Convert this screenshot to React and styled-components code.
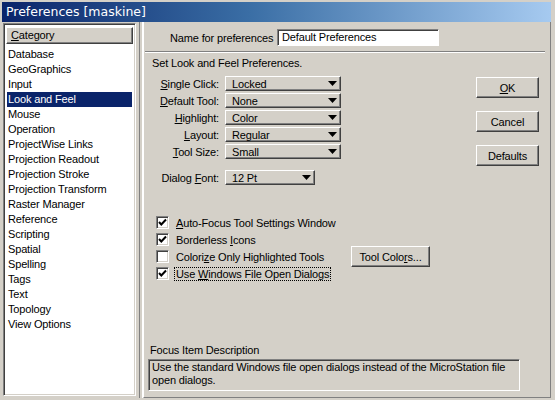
import { Fragment } from "react";
import styled, { createGlobalStyle } from "styled-components";

const GlobalStyle = createGlobalStyle`
  html, body { margin: 0; padding: 0; background: #d4d0c8; }
  * { box-sizing: border-box; }
  body {
    font-family: "Liberation Sans", Arial, sans-serif;
    font-size: 11px;
    letter-spacing: -0.15px;
    color: #000;
  }
`;

const Window = styled.div`
  width: 555px;
  height: 400px;
  background: #d4d0c8;
  padding: 2px 4px 2px 2px;
  display: flex;
  flex-direction: column;
  overflow: hidden;
`;

const TitleBar = styled.div`
  height: 20px;
  line-height: 20px;
  padding-left: 4px;
  background: linear-gradient(to right, #0a246a 0%, #3a6ea5 45%, #a6caf0 100%);
  color: #fff;
  font-family: "DejaVu Sans", Verdana, sans-serif;
  font-size: 12.5px;
  letter-spacing: 0;
  white-space: nowrap;
`;

const Body = styled.div`
  flex: 1;
  display: flex;
  min-height: 0;
`;

const ListPane = styled.div`
  width: 133px;
  margin: 1px 0 2px 1px;
  background: #fff;
  border: 1px solid;
  border-color: #808080 #fff #fff #808080;
  box-shadow: inset 1px 1px #404040, inset -1px -1px #d4d0c8;
  padding: 3px 2px 2px 2px;
  display: flex;
  flex-direction: column;
`;

const ListHeader = styled.div`
  height: 17px;
  line-height: 15px;
  padding-left: 4px;
  background: #d4d0c8;
  border: 1px solid;
  border-color: #fff #404040 #404040 #fff;
  box-shadow: inset -1px -1px #808080;
`;

const Items = styled.div`
  margin-top: 3px;
  padding: 0 1px 0 0;
  display: flex;
  flex-direction: column;
`;

const Item = styled.div`
  height: 15px;
  line-height: 15px;
  padding-left: 1px;
  margin-left: 1px;
  white-space: nowrap;
  background: ${(p) => (p.$selected ? "#0a246a" : "transparent")};
  color: ${(p) => (p.$selected ? "#fff" : "#000")};
`;

const Splitter = styled.div`
  width: 7px;
  display: flex;
  justify-content: center;
  &::before {
    content: "";
    width: 2px;
    margin-left: 2px;
    border-left: 1px solid #808080;
    border-right: 1px solid #fff;
  }
`;

const RightPane = styled.div`
  flex: 1;
  display: flex;
  flex-direction: column;
  border-left: 1px solid #fff;
  border-right: 1px solid #808080;
  border-bottom: 1px solid #808080;
`;

const NameRow = styled.div`
  display: flex;
  align-items: center;
  margin-top: 7px;
  padding-left: 26px;
  gap: 6px;
`;

const NameLabel = styled.span`
  width: 101px;
  text-align: right;
  white-space: nowrap;
`;

const TextInput = styled.div`
  width: 162px;
  height: 17px;
  line-height: 15px;
  padding-left: 4px;
  background: #fff;
  border: 1px solid;
  border-color: #808080 #fff #fff #808080;
  box-shadow: inset 1px 1px #404040;
`;

const Separator = styled.div`
  margin: 5px 0 0 1px;
  width: 400px;
  border-top: 1px solid #808080;
  border-bottom: 1px solid #fff;
`;

const Main = styled.div`
  display: flex;
`;

const Settings = styled.div`
  padding-left: 8px;
  display: flex;
  flex-direction: column;
`;

const Heading = styled.div`
  margin-top: 3px;
  line-height: 14px;
  white-space: nowrap;
`;

const FormGrid = styled.div`
  display: grid;
  grid-template-columns: 67px auto;
  grid-auto-rows: 15px;
  column-gap: 6px;
  row-gap: 2px;
  margin-top: ${(p) => p.$top}px;
  align-items: center;
`;

const FieldLabel = styled.span`
  text-align: right;
  white-space: nowrap;
`;

const Dropdown = styled.div`
  width: ${(p) => p.$width}px;
  height: 15px;
  display: flex;
  align-items: center;
  justify-content: space-between;
  padding: 0 3px 0 6px;
  background: #d4d0c8;
  border: 1px solid;
  border-color: #fff #404040 #404040 #fff;
  box-shadow: inset -1px -1px #808080;
`;

const Arrow = () => (
  <svg width="9" height="5" viewBox="0 0 9 5">
    <polygon points="0,0 9,0 4.5,5" fill="#000" />
  </svg>
);

const CheckList = styled.div`
  display: grid;
  grid-template-columns: 195px auto;
  grid-auto-rows: 17px;
  margin: 29px 0 0 4px;
  align-items: center;
`;

const CheckRow = styled.div`
  grid-column: 1;
  display: flex;
  align-items: center;
  gap: 5px;
  white-space: nowrap;
`;

const Box = styled.div`
  width: 13px;
  height: 13px;
  flex: none;
  background: #fff;
  border: 1px solid;
  border-color: #808080 #fff #fff #808080;
  box-shadow: inset 1px 1px #404040, inset -1px -1px #d4d0c8;
  display: flex;
  align-items: center;
  justify-content: center;
`;

const CheckLabel = styled.span`
  padding: 0 1px;
  border: 1px dotted ${(p) => (p.$focused ? "#000" : "transparent")};
  line-height: 12px;
`;

const Button = styled.div`
  width: ${(p) => p.$width}px;
  height: 21px;
  display: flex;
  align-items: center;
  justify-content: center;
  background: #d4d0c8;
  border: 1px solid;
  border-color: #fff #404040 #404040 #fff;
  box-shadow: inset -1px -1px #808080;
  white-space: nowrap;
`;

const ToolColors = styled(Button)`
  grid-column: 2;
  grid-row: 3;
  justify-self: start;
  align-self: center;
`;

const Buttons = styled.div`
  margin-left: auto;
  margin-right: 11px;
  padding-top: 24px;
  display: flex;
  flex-direction: column;
  gap: 13px;
`;

const Focus = styled.div`
  margin-top: auto;
  margin-bottom: 6px;
  padding-left: 4px;
`;

const FocusLabel = styled.div`
  padding-left: 2px;
  line-height: 14px;
  margin-bottom: 2px;
`;

const FocusBox = styled.div`
  width: 372px;
  height: 32px;
  padding: 1px 3px;
  line-height: 13px;
  border: 1px solid;
  border-color: #808080 #fff #fff #808080;
  box-shadow: inset 1px 1px #404040;
`;

const Check = () => (
  <svg width="9" height="9" viewBox="0 0 9 9">
    <polyline points="1,4 3.3,6.5 8,1.5" fill="none" stroke="#000" strokeWidth="2" />
  </svg>
);

const categories = [
  "Database", "GeoGraphics", "Input", "Look and Feel", "Mouse", "Operation",
  "ProjectWise Links", "Projection Readout", "Projection Stroke",
  "Projection Transform", "Raster Manager", "Reference", "Scripting",
  "Spatial", "Spelling", "Tags", "Text", "Topology", "View Options",
];

const fields = [
  { key: "S", rest: "ingle Click:", value: "Locked" },
  { key: "D", rest: "efault Tool:", value: "None" },
  { key: "H", rest: "ighlight:", value: "Color" },
  { key: "L", rest: "ayout:", value: "Regular" },
  { key: "T", rest: "ool Size:", value: "Small" },
];

const checks = [
  { label: <><u>A</u>uto-Focus Tool Settings Window</>, on: true },
  { label: <>Borderless <u>I</u>cons</>, on: true },
  { label: <>Colori<u>z</u>e Only Highlighted Tools</>, on: false },
  { label: <>Use <u>W</u>indows File Open Dialogs</>, on: true, focus: true },
];

export default function App() {
  return (
    <>
      <GlobalStyle />
      <Window>
        <TitleBar>Preferences [maskine]</TitleBar>
        <Body>
          <ListPane>
            <ListHeader><u>C</u>ategory</ListHeader>
            <Items>
              {categories.map((c) => (
                <Item key={c} $selected={c === "Look and Feel"}>{c}</Item>
              ))}
            </Items>
          </ListPane>
          <Splitter />
          <RightPane>
            <NameRow>
              <NameLabel>Name for preferences</NameLabel>
              <TextInput>Default Preferences</TextInput>
            </NameRow>
            <Separator />
            <Main>
              <Settings>
                <Heading>Set Look and Feel Preferences.</Heading>
                <FormGrid $top={6}>
                  {fields.map((f) => (
                    <Fragment key={f.key}>
                      <FieldLabel><u>{f.key}</u>{f.rest}</FieldLabel>
                      <Dropdown $width={116}>
                        <span>{f.value}</span>
                        <Arrow />
                      </Dropdown>
                    </Fragment>
                  ))}
                </FormGrid>
                <FormGrid $top={11}>
                  <FieldLabel>Dialog <u>F</u>ont:</FieldLabel>
                  <Dropdown $width={90}>
                    <span>12 Pt</span>
                    <Arrow />
                  </Dropdown>
                </FormGrid>
                <CheckList>
                  {checks.map((c, i) => (
                    <CheckRow key={i} style={{ gridRow: i + 1 }}>
                      <Box>{c.on && <Check />}</Box>
                      <CheckLabel $focused={c.focus}>{c.label}</CheckLabel>
                    </CheckRow>
                  ))}
                  <ToolColors $width={79}>Tool Colo<u>r</u>s...</ToolColors>
                </CheckList>
              </Settings>
              <Buttons>
                <Button $width={63}><u>O</u>K</Button>
                <Button $width={63}>Cancel</Button>
                <Button $width={63}>Defaults</Button>
              </Buttons>
            </Main>
            <Focus>
              <FocusLabel>Focus Item Description</FocusLabel>
              <FocusBox>
                Use the standard Windows file open dialogs instead of the MicroStation file open dialogs.
              </FocusBox>
            </Focus>
          </RightPane>
        </Body>
      </Window>
    </>
  );
}
